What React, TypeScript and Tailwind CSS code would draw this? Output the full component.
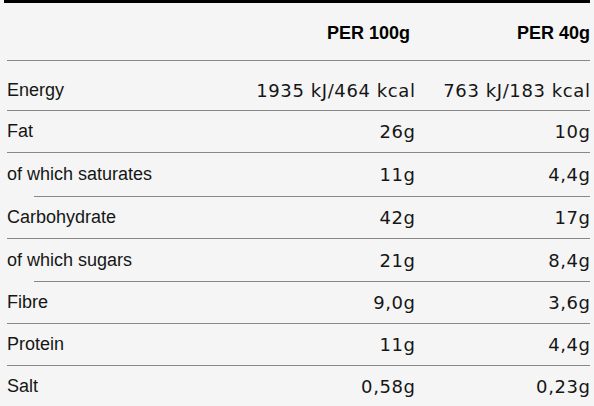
import React from "react";

type Row = {
  label: string;
  per100: string;
  per40: string;
  h: string;
  indent?: boolean;
  pad?: string;
};

const rows: Row[] = [
  { label: "Energy", per100: "1935 kJ/464 kcal", per40: "763 kJ/183 kcal", h: "h-[49px]", pad: "pt-[9px]" },
  { label: "Fat", per100: "26g", per40: "10g", h: "h-[41px]" },
  { label: "of which saturates", per100: "11g", per40: "4,4g", h: "h-[43px]", indent: true },
  { label: "Carbohydrate", per100: "42g", per40: "17g", h: "h-[41px]" },
  { label: "of which sugars", per100: "21g", per40: "8,4g", h: "h-[42px]", indent: true },
  { label: "Fibre", per100: "9,0g", per40: "3,6g", h: "h-[41px]" },
  { label: "Protein", per100: "11g", per40: "4,4g", h: "h-[41px]" },
  { label: "Salt", per100: "0,58g", per40: "0,23g", h: "h-[40px]" },
];

const num = "text-right text-[18px] tracking-[0.6px] -mr-[0.6px] font-['DejaVu_Sans',sans-serif]";

export default function App() {
  return (
    <div className="w-[594px] h-[406px] bg-[#f5f5f5] text-[#161616] overflow-hidden font-['Liberation_Sans',Arial,sans-serif]">
      {/* top rule */}
      <div className="ml-[4px] w-[586px] h-[3px] bg-black" />

      <div className="ml-[7px] w-[583px]">
        {/* header */}
        <div className="grid grid-cols-[1fr_175px_175px] items-center h-[57px] pt-[3px] font-bold text-[18px] text-black">
          <span />
          <span className="text-right pr-[5px]">PER 100g</span>
          <span className="text-right">PER 40g</span>
        </div>
        <div className="h-px bg-[#888]" />

        {rows.map((r, i) => (
          <div key={r.label}>
            <div
              className={`grid grid-cols-[1fr_175px_175px] items-center text-[18px] ${r.h} ${r.pad ?? ""}`}
            >
              <span>{r.label}</span>
              <span className={num}>{r.per100}</span>
              <span className={num}>{r.per40}</span>
            </div>
            {i < rows.length - 1 && (
              <div className={`h-px bg-[#888] ${r.indent ? "ml-[27px]" : ""}`} />
            )}
          </div>
        ))}
      </div>
    </div>
  );
}
